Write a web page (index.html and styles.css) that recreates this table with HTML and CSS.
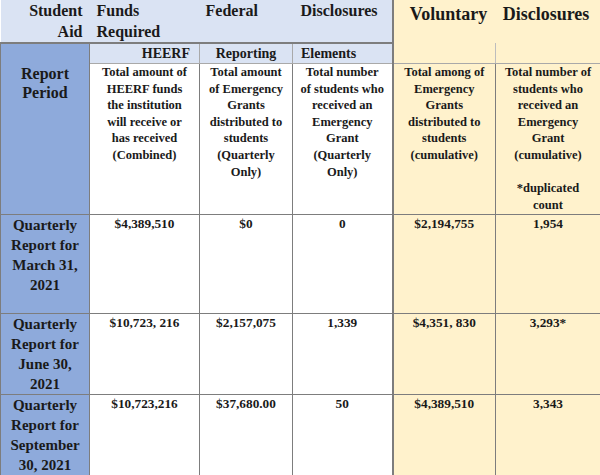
FILE: index.html
```html
<!DOCTYPE html>
<html>
<head>
<meta charset="utf-8">
<link rel="stylesheet" href="styles.css">
</head>
<body>
<table class="grid">
  <colgroup>
    <col class="w1"><col class="w2"><col class="w3"><col class="w4"><col class="w5"><col class="w6">
  </colgroup>
  <tr class="r1">
    <th class="lb t1 c1">Student<br>Aid</th>
    <th class="lb t1 c2">Funds<br>Required</th>
    <th class="lb t1 c3">Federal</th>
    <th class="lb t1 c4">Disclosures</th>
    <th class="yl vol c5">Voluntary</th>
    <th class="yl vol c6">Disclosures</th>
  </tr>
  <tr class="r2">
    <th class="db c1"></th>
    <th class="lb t2 c2">HEERF</th>
    <th class="lb t2 c3">Reporting</th>
    <th class="lb t2 c4">Elements</th>
    <th class="yl t2 c5"></th>
    <th class="yl t2 c6"></th>
  </tr>
  <tr class="r3">
    <th class="db period">Report<br>Period</th>
    <th class="wh desc">Total amount of<br>HEERF funds<br>the institution<br>will receive or<br>has received<br>(Combined)</th>
    <th class="wh desc">Total amount<br>of Emergency<br>Grants<br>distributed to<br>students<br>(Quarterly<br>Only)</th>
    <th class="wh desc">Total number<br>of students who<br>received an<br>Emergency<br>Grant<br>(Quarterly<br>Only)</th>
    <th class="yl desc">Total among of<br>Emergency<br>Grants<br>distributed to<br>students<br>(cumulative)</th>
    <th class="yl desc">Total number of<br>students who<br>received an<br>Emergency<br>Grant<br>(cumulative)<br><br>*duplicated<br>count</th>
  </tr>
  <tr class="r4">
    <th class="db period q">Quarterly<br>Report for<br>March 31,<br>2021</th>
    <td class="wh">$4,389,510</td>
    <td class="wh">$0</td>
    <td class="wh">0</td>
    <td class="yl">$2,194,755</td>
    <td class="yl">1,954</td>
  </tr>
  <tr class="r5">
    <th class="db period q">Quarterly<br>Report for<br>June 30,<br>2021</th>
    <td class="wh">$10,723, 216</td>
    <td class="wh">$2,157,075</td>
    <td class="wh">1,339</td>
    <td class="yl">$4,351, 830</td>
    <td class="yl">3,293*</td>
  </tr>
  <tr class="r6">
    <th class="db period q">Quarterly<br>Report for<br>September<br>30, 2021</th>
    <td class="wh">$10,723,216</td>
    <td class="wh">$37,680.00</td>
    <td class="wh">50</td>
    <td class="yl">$4,389,510</td>
    <td class="yl">3,343</td>
  </tr>
</table>
</body>
</html>
```

FILE: styles.css
```css
html, body {
  margin: 0;
  padding: 0;
  background: #ffffff;
  overflow: hidden;
}
body {
  width: 600px;
  height: 475px;
  font-family: "Liberation Serif", serif;
  font-weight: bold;
  color: #1a1a1a;
}
.grid {
  width: 600px;
  table-layout: fixed;
  border-collapse: collapse;
  font-family: "Liberation Serif", serif;
}
.w1 { width: 89px; }
.w2 { width: 110px; }
.w3 { width: 93px; }
.w4 { width: 100px; }
.w5 { width: 103px; }
.w6 { width: 105px; }

th, td {
  padding: 0;
  border: 1px solid #7d7d7d;
  vertical-align: top;
  text-align: center;
  font-weight: bold;
  font-family: "Liberation Serif", serif;
  white-space: nowrap;
}
.lb { background: #dae3f3; }
.db { background: #8eaadb; }
.yl { background: #fff2cc; }
.wh { background: #ffffff; }

/* row 1 */
.r1 th { height: 40px; border-top: none; }
.t1 {
  font-size: 16px;
  line-height: 21px;
  border-left: none;
  border-right: none;
  border-bottom: 2px solid #7d7d7d;
}
.t1.c1 { text-align: right; padding-right: 7px; }
.t1.c2 { text-align: left; padding-left: 7px; }
.t1.c3 { text-align: left; padding-left: 6px; }
.t1.c4 { text-align: left; padding-left: 8px; border-right: 2px solid #7d7d7d; }
.vol {
  font-size: 18px;
  line-height: 26px;
  padding-top: 1px;
  border: none;
}
.vol.c5 { padding-left: 8px; }
.vol.c6 { padding-right: 4px; }

/* row 2 */
.r2 th { height: 19px; }
.t2 {
  font-size: 14px;
  line-height: 19px;
  border-color: #a9a9a9;
}
.t2.c2 { text-align: right; padding-right: 9px; border-left: 1px solid #7d7d7d; }
.t2.c4 { text-align: left; padding-left: 8px; border-right: 2px solid #7d7d7d; }
.yl.t2 { border-top: none; }
.yl.t2.c5 { border-right: 1px solid #bdbdbd; }
.r2 .db { border-bottom: none; }

/* row 3 */
.r3 th { height: 150px; }
.desc {
  font-size: 12.5px;
  line-height: 16.6px;
  padding: 0;
}
.period {
  font-size: 16px;
  line-height: 19px;
  padding-top: 0;
}
.r3 .db { border-top: none; }

/* data rows */
td {
  font-size: 13.3px;
  line-height: 17px;
  padding-top: 0;
}
.q {
  font-size: 15px;
  line-height: 20px;
  padding-top: 0;
}
.r4 th, .r4 td { height: 98px; }
.r5 th, .r5 td { height: 79px; }
.r6 th, .r6 td { height: 100px; }

.grid tr > :nth-child(4) { border-right-width: 2px; }
```
